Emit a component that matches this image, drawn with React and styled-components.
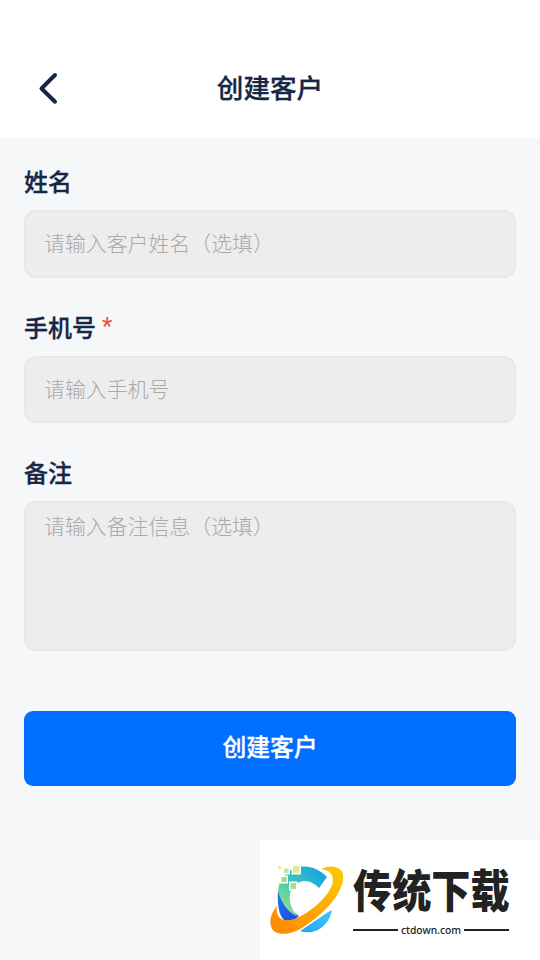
import styled, { createGlobalStyle } from "styled-components";

const color_navy = "#162645";
const color_page = "#f5f7f9";
const color_field = "#ededed";
const color_field_border = "#e7e8e9";
const color_placeholder = "#a9a9a9";
const color_primary = "#006eff";
const color_required = "#f5483f";
const color_brand_text = "#222222";

const GlobalStyle = createGlobalStyle`
  * {
    box-sizing: border-box;
  }

  body {
    margin: 0;
    background-color: ${color_page};
    font-family: "Noto Sans CJK SC", sans-serif;
  }
`;

const Page = styled.div`
  display: flex;
  flex-direction: column;
  height: 960px;
  overflow: hidden;
  background-color: ${color_page};
`;

const Header = styled.header`
  display: grid;
  grid-template-columns: 72px 1fr 72px;
  align-items: center;
  height: 138px;
  padding: 38px 12px 0;
  background-color: #ffffff;
`;

const BackButton = styled.button`
  display: flex;
  justify-content: center;
  padding: 0;
  border: none;
  background-color: transparent;
`;

const Title = styled.h1`
  margin: 0;
  padding-bottom: 2px;
  color: ${color_navy};
  font-size: 26.6px;
  font-weight: 500;
  line-height: 40px;
  text-align: center;
  -webkit-text-stroke: 0.3px ${color_navy};
`;

const Form = styled.form`
  display: flex;
  flex-direction: column;
  padding: 27px 24px 0;
`;

const Field = styled.div`
  display: flex;
  flex-direction: column;
  margin-bottom: ${(props) => props.$gap || "33px"};
`;

const Label = styled.label`
  height: 45px;
  color: ${color_navy};
  font-size: 24px;
  font-weight: 500;
  line-height: 32px;
  -webkit-text-stroke: 0.3px ${color_navy};
`;

const Required = styled.span`
  margin-left: 6px;
  color: ${color_required};
  font-family: Roboto, sans-serif;
  font-weight: 400;
  line-height: 0;
  vertical-align: 3px;
  -webkit-text-stroke: 0;
`;

const Input = styled.input`
  width: 100%;
  height: 67.5px;
  padding: 0 18px 3px;
  border: 2px solid ${color_field_border};
  border-radius: 12px;
  outline: none;
  background-color: ${color_field};
  color: ${color_navy};
  font-family: inherit;
  font-size: 20.9px;
  font-weight: 300;

  &::placeholder {
    color: ${color_placeholder};
    opacity: 1;
  }
`;

const Textarea = styled(Input).attrs({ as: "textarea" })`
  display: block;
  height: 150px;
  padding: 7px 18px;
  line-height: 31px;
  resize: none;
`;

const SubmitButton = styled.button`
  height: 75px;
  padding: 0 0 7px;
  border: none;
  border-radius: 9px;
  background-color: ${color_primary};
  color: #ffffff;
  font-family: inherit;
  font-size: 23.8px;
  font-weight: 500;
  -webkit-text-stroke: 0.3px #ffffff;
`;

const Brand = styled.footer`
  display: flex;
  align-self: flex-end;
  width: 280px;
  height: 120px;
  margin-top: auto;
  padding: 20px 0 0 5px;
  background-color: #ffffff;
`;

const BrandText = styled.div`
  display: flex;
  flex-direction: column;
  width: 156px;
  margin-left: 3px;
  padding-top: 7px;
`;

const BrandName = styled.span`
  width: 188px;
  height: 50px;
  color: ${color_brand_text};
  font-size: 45px;
  font-weight: 900;
  line-height: 43px;
  white-space: nowrap;
  transform: scaleX(0.87);
  transform-origin: left;
`;

const BrandSite = styled.span`
  display: flex;
  align-items: center;
  gap: 3px;
  height: 16px;
  margin-top: 5px;
  color: ${color_brand_text};
  font-family: "Noto Sans", sans-serif;
  font-size: 10.3px;
  font-weight: 500;

  &::before,
  &::after {
    content: "";
    flex: 1;
    height: 2px;
    background-color: ${color_brand_text};
  }
`;

const BackIcon = () => (
  <svg width="24" height="36" viewBox="0 0 24 36" fill="none">
    <path
      d="M19 5L5.5 18.5L19 31.7"
      stroke={color_navy}
      strokeWidth="4"
      strokeLinecap="round"
      strokeLinejoin="round"
    />
  </svg>
);

const BrandLogo = () => (
  <svg width="85" height="85" viewBox="265 860 85 85">
    <defs>
      <linearGradient id="arc" x1="0" y1="1" x2="1" y2="0">
        <stop offset="0.15" stopColor="#87df88" />
        <stop offset="0.5" stopColor="#38c5bd" />
        <stop offset="0.9" stopColor="#14a3e8" />
      </linearGradient>
      <linearGradient id="deep" x1="0" y1="0" x2="1" y2="1">
        <stop offset="0" stopColor="#2379f0" />
        <stop offset="1" stopColor="#1747db" />
      </linearGradient>
      <linearGradient id="ring" x1="0" y1="1" x2="1" y2="0">
        <stop offset="0" stopColor="#ff8505" />
        <stop offset="1" stopColor="#ffc900" />
      </linearGradient>
      <linearGradient id="tail" x1="0" y1="1" x2="1" y2="0">
        <stop offset="0" stopColor="#20a3f5" />
        <stop offset="1" stopColor="#43cbfb" />
      </linearGradient>
    </defs>
    <path
      d="M278 890C277 905 279 916 285 921C290 923 295 920 299 916C290 910 283 902 278 890Z"
      fill="url(#deep)"
    />
    <path
      d="M327 877C315 864 297 863 286 874C280 880 277 887 279 894C282 904 288 912 298 917C288 906 287 892 295 885C303 878 312 881 319 888Z"
      fill="url(#arc)"
    />
    <path
      d="M332 910C327 912 320 918 300 931C315 936 329 926 332 910Z"
      fill="url(#tail)"
    />
    <path
      d="M321 869C334 863 345 868 343 880C340 898 320 917 302 928C289 936 273 936 271 926C269 919 272 912 277 906C275 919 284 924 299 917C314 910 333 892 333 880C333 873 328 870 321 869Z"
      fill="url(#ring)"
    />
    <g stroke="#ffffff" strokeWidth="1.5">
      <rect x="277.25" y="865.25" width="4.5" height="4.5" fill="#e5ef95" />
      <rect x="283.25" y="867.75" width="6" height="6" fill="#c1e59a" />
      <rect x="292.25" y="865.25" width="8" height="8.5" fill="#d9ee8e" />
      <rect x="280.75" y="876.25" width="6.5" height="6.5" fill="#9bde86" />
      <rect x="289.75" y="882.25" width="7" height="7.5" fill="#a4e282" />
    </g>
  </svg>
);

const fields = [
  { id: "name", label: "姓名", placeholder: "请输入客户姓名（选填）" },
  { id: "phone", label: "手机号", placeholder: "请输入手机号", required: true },
  {
    id: "remark",
    label: "备注",
    placeholder: "请输入备注信息（选填）",
    multiline: true,
    gap: "60px",
  },
];

const App = () => (
  <>
    <GlobalStyle />
    <Page>
      <Header>
        <BackButton type="button" aria-label="返回">
          <BackIcon />
        </BackButton>
        <Title>创建客户</Title>
      </Header>
      <Form>
        {fields.map((field) => (
          <Field key={field.id} $gap={field.gap}>
            <Label htmlFor={field.id}>
              {field.label}
              {field.required && <Required>*</Required>}
            </Label>
            {field.multiline ? (
              <Textarea id={field.id} placeholder={field.placeholder} />
            ) : (
              <Input id={field.id} placeholder={field.placeholder} />
            )}
          </Field>
        ))}
        <SubmitButton type="button">创建客户</SubmitButton>
      </Form>
      <Brand>
        <BrandLogo />
        <BrandText>
          <BrandName>传统下载</BrandName>
          <BrandSite>ctdown.com</BrandSite>
        </BrandText>
      </Brand>
    </Page>
  </>
);

export default App;
